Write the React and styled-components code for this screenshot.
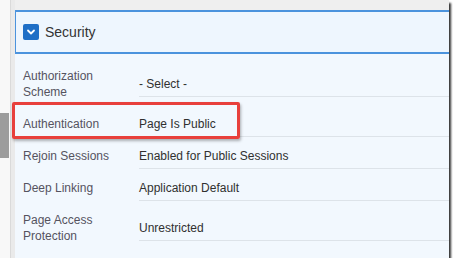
import React from 'react';
import styled, { createGlobalStyle } from 'styled-components';

const GlobalStyle = createGlobalStyle`
    body {
        margin: 0;
        background: #ffffff;
        font-family: "Liberation Sans", Arial, sans-serif;
        overflow: hidden;
    }
`;

const Frame = styled.div`
    width: 449px;
    height: 258px;
    display: flex;
    background: #fafafa;
    box-shadow: 2px 3px 2px rgba(0, 0, 0, 0.8);
    overflow: hidden;
`;

// left edge of the builder, cut off by the snip
const Gutter = styled.div`
    width: 10px;
    display: flex;
    flex-direction: column;
    border-right: 1px solid #dadada;
    background: #f8f8f8;
`;

const GutterBlock = styled.div`
    margin-top: 113px;
    width: 9px;
    height: 45px;
    background: #9c9c9c;
`;

const Strip = styled.div`
    width: 4px;
    background: #eaeaea;
`;

const Main = styled.div`
    flex: 1;
    display: flex;
    flex-direction: column;
`;

const TopBand = styled.div`
    height: 10px;
    background: #efefef;
`;

const Header = styled.div`
    height: 40px;
    display: flex;
    align-items: center;
    gap: 6px;
    padding-left: 7px;
    background: #eef6fe;
    border-top: 2px solid #4b93dd;
    border-bottom: 2px solid #4b93dd;
    border-left: 1px solid #4b93dd;
`;

const Check = styled.span`
    width: 16px;
    height: 16px;
    border-radius: 2px;
    background: #1f6fc6;
    display: flex;
    align-items: center;
    justify-content: center;
`;

const Title = styled.span`
    font-size: 14px;
    color: #333333;
`;

const Body = styled.div`
    flex: 1;
    padding: 6px 0 0 8px;
    background: #f2f8fe;
    display: flex;
    flex-direction: column;
`;

const Row = styled.div`
    position: relative;
    height: ${(p) => (p.$tall ? '48px' : '32px')};
    flex-shrink: 0;
    display: flex;
    align-items: center;
`;

const Label = styled.div`
    width: 116px;
    font-size: 12px;
    line-height: 16px;
    color: #55535f;
`;

const Field = styled.div`
    flex: 1;
    font-size: 12px;
    line-height: 14px;
    color: #303030;
    padding: 5px 0;
    border-bottom: 1px solid #dde3e9;
`;

const Highlight = styled.div`
    position: absolute;
    left: -11px;
    top: -6px;
    width: 222px;
    height: 31px;
    border: 3px solid #e8403c;
    border-radius: 2px;
    box-shadow: 1px 2px 3px rgba(0, 0, 0, 0.3);
    pointer-events: none;
`;

const rows = [
    { label: ['Authorization', 'Scheme'], value: '- Select -', tall: true },
    { label: ['Authentication'], value: 'Page Is Public', marked: true },
    { label: ['Rejoin Sessions'], value: 'Enabled for Public Sessions' },
    { label: ['Deep Linking'], value: 'Application Default' },
    { label: ['Page Access', 'Protection'], value: 'Unrestricted', tall: true },
];

const App = () => (
    <>
        <GlobalStyle />
        <Frame>
            <Gutter>
                <GutterBlock />
            </Gutter>
            <Strip />
            <Main>
                <TopBand />
                <Header>
                    <Check>
                        <svg width="10" height="10" viewBox="0 0 10 10">
                            <path d="M2 3.5 L5 6.5 L8 3.5" fill="none" stroke="#ffffff" strokeWidth="1.8" strokeLinecap="round" strokeLinejoin="round" />
                        </svg>
                    </Check>
                    <Title>Security</Title>
                </Header>
                <Body>
                    {rows.map((r) => (
                        <Row key={r.label[0]} $tall={r.tall}>
                            <Label>
                                {r.label.map((l) => (
                                    <div key={l}>{l}</div>
                                ))}
                            </Label>
                            <Field>{r.value}</Field>
                            {r.marked && <Highlight />}
                        </Row>
                    ))}
                </Body>
            </Main>
        </Frame>
    </>
);

export default App;
